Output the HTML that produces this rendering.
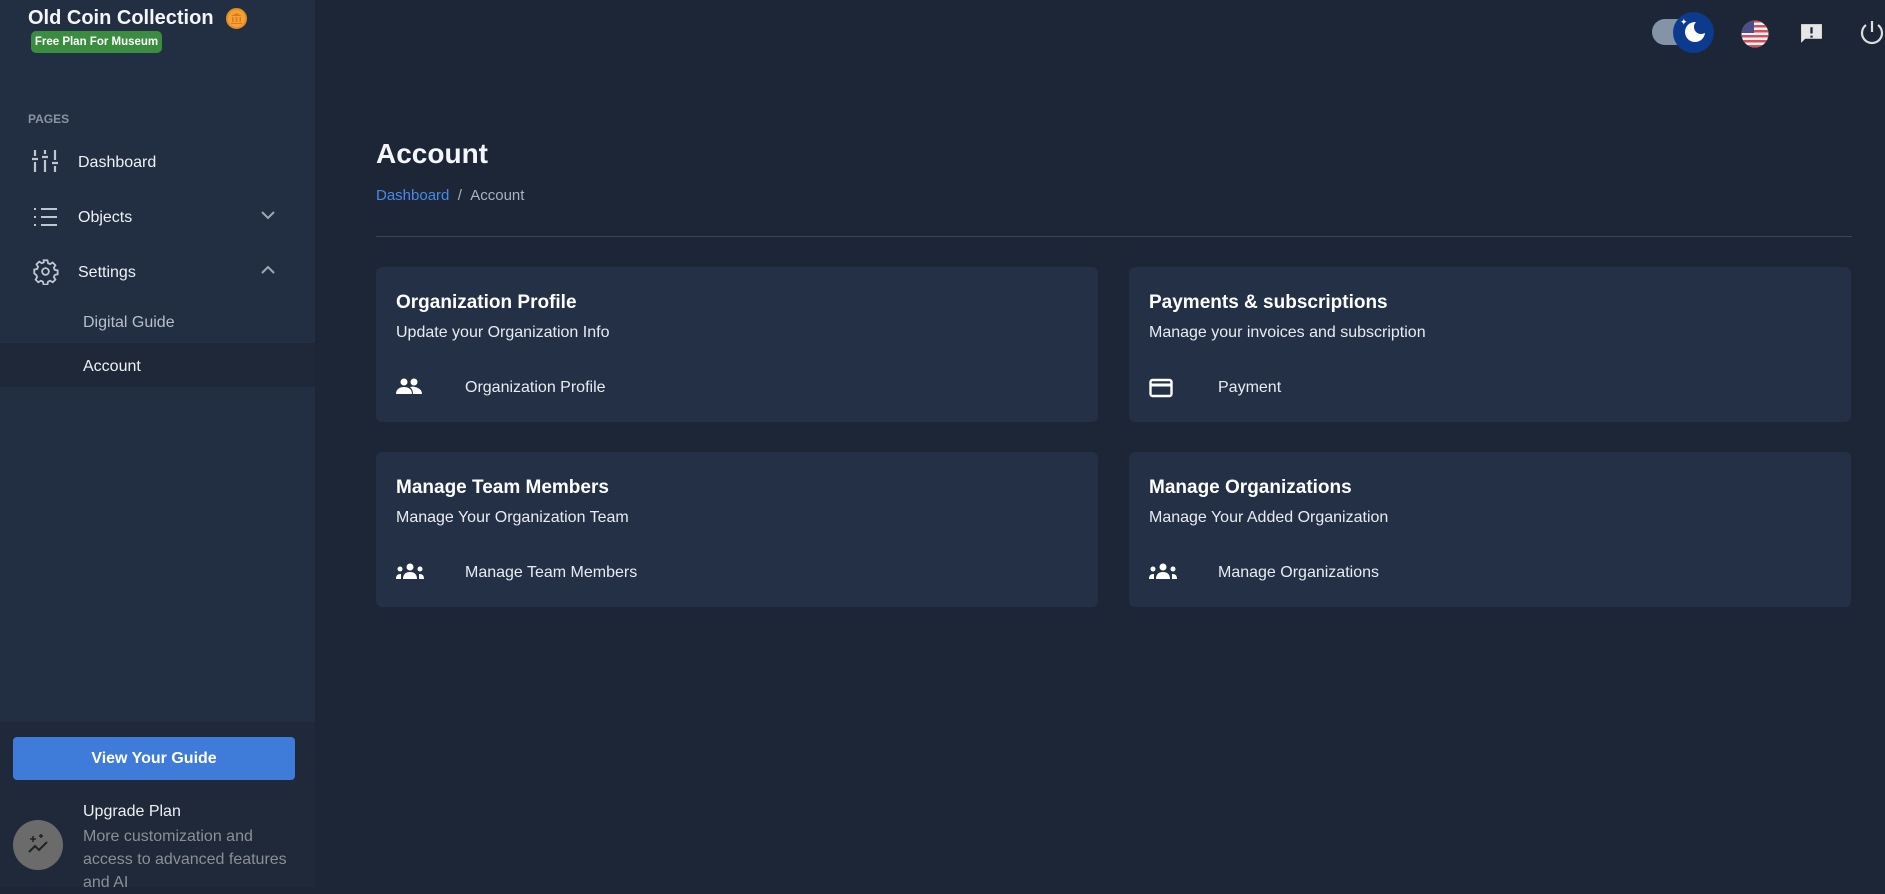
<!DOCTYPE html>
<html><head><meta charset="utf-8"><style>
*{box-sizing:border-box;margin:0;padding:0}
body{width:1885px;height:887px;overflow:hidden;background:#1c2636;font-family:"Liberation Sans",sans-serif;color:#fff;position:relative}
.sb{position:absolute;left:0;top:0;width:315px;height:887px;background:#222e42}
.sbb{position:absolute;left:0;top:722px;width:315px;height:165px;background:#1f2939}
.a{position:absolute;white-space:nowrap}
.card{position:absolute;background:#243045;border-radius:6px;width:722px;height:155px}
.card .t{position:absolute;left:20px;top:25px;font-size:19px;font-weight:bold}
.card .s{position:absolute;left:20px;top:57px;font-size:16px;color:#e8ecf2}
.card .l{position:absolute;left:89px;top:112px;font-size:16px;color:#e8ecf2}
.card svg{position:absolute;left:20px;top:111px}
</style></head><body>
<div class="sb"></div><div class="sbb"></div>
<div class="a" style="left:28px;top:7px;font-size:20px;font-weight:bold;color:#f4f6fa">Old Coin Collection</div>
<div class="a" style="left:226px;top:8px;width:21px;height:21px;border-radius:50%;background:#f2a23a;border:2px solid #e58f20"></div>
<svg class="a" style="left:230px;top:12px" width="13" height="13" viewBox="0 0 13 13" fill="#e07a10"><path d="M1 4l5.5-3 5.5 3zM2 5h1.5v5H2zM5.7 5h1.6v5H5.7zM9.5 5H11v5H9.5zM1 11h11v1H1z"/></svg>
<div class="a" style="left:31px;top:31px;width:131px;height:22px;background:#3a8c3f;border-radius:5px;font-size:11.5px;font-weight:bold;line-height:22px;text-align:center">Free Plan For Museum</div>
<div class="a" style="left:28px;top:112px;font-size:12px;font-weight:bold;color:#8a93a3">PAGES</div>
<svg class="a" style="left:32px;top:149px" width="27" height="24" viewBox="0 0 27 24" stroke="#c0c6d0" stroke-width="2.2" fill="none"><path d="M3 1v6M3 13v10M0 10h6M13 1v4M13 11v12M10 8h6M23 1v10M23 17v6M20 14h6"/></svg>
<div class="a" style="left:78px;top:154px;font-size:16px;color:#eef1f5">Dashboard</div>
<svg class="a" style="left:34px;top:207px" width="24" height="20" stroke="#c0c6d0" stroke-width="2" fill="none"><path d="M0 2h2M7 2h16M0 10h2M7 10h16M0 18h2M7 18h16"/></svg>
<div class="a" style="left:78px;top:209px;font-size:16px;color:#eef1f5">Objects</div>
<svg class="a" style="left:260px;top:210px" width="16" height="10" stroke="#a0a8b5" stroke-width="2" fill="none"><path d="M2 2l6 6 6-6"/></svg>
<svg class="a" style="left:32px;top:258px" width="27" height="27" viewBox="0 0 24 24" stroke="#c0c6d0" stroke-width="1.6" fill="none"><path d="M10.3 2h3.4l.6 2.6 1.8.8 2.3-1.4 2.4 2.4-1.4 2.3.8 1.8 2.6.6v3.4l-2.6.6-.8 1.8 1.4 2.3-2.4 2.4-2.3-1.4-1.8.8-.6 2.6h-3.4l-.6-2.6-1.8-.8-2.3 1.4-2.4-2.4 1.4-2.3-.8-1.8L2 13.7v-3.4l2.6-.6.8-1.8L4 5.6 6.4 3.2l2.3 1.4 1.8-.8z"/><circle cx="12" cy="12" r="3"/></svg>
<div class="a" style="left:78px;top:264px;font-size:16px;color:#eef1f5">Settings</div>
<svg class="a" style="left:260px;top:265px" width="16" height="10" stroke="#a0a8b5" stroke-width="2" fill="none"><path d="M2 8l6-6 6 6"/></svg>
<div class="a" style="left:83px;top:314px;font-size:16px;color:#b8bfca">Digital Guide</div>
<div class="a" style="left:0;top:343px;width:315px;height:44px;background:#1e2838"></div>
<div class="a" style="left:83px;top:358px;font-size:16px;color:#eef1f5">Account</div>
<div class="a" style="left:13px;top:737px;width:282px;height:43px;background:#3f7bd9;border-radius:4px;font-size:16px;font-weight:bold;line-height:43px;text-align:center">View Your Guide</div>
<div class="a" style="left:13px;top:820px;width:50px;height:50px;border-radius:50%;background:#6b6b6b"></div>
<svg class="a" style="left:25px;top:832px" width="26" height="26" stroke="#222" stroke-width="2" fill="none"><path d="M4 20l6-6 4 4 8-8"/><path d="M8 4v6M5 7h6M16 2v4M14 4h4" stroke-width="1.5"/></svg>
<div class="a" style="left:83px;top:803px;font-size:16px;color:#eef1f5">Upgrade Plan</div>
<div class="a" style="left:83px;top:825px;font-size:16px;line-height:23px;color:#8b8f96">More customization and<br>access to advanced features<br>and AI</div>

<div class="a" style="left:1652px;top:19px;width:50px;height:26px;border-radius:13px;background:#8494a6"></div>
<div class="a" style="left:1673px;top:12px;width:41px;height:41px;border-radius:50%;background:#0b3a8f"></div>
<div class="a" style="left:1685px;top:22px;width:20px;height:20px;border-radius:50%;background:#fff"></div>
<div class="a" style="left:1694px;top:20px;width:14px;height:14px;border-radius:50%;background:#0b3a8f"></div>
<div class="a" style="left:1680px;top:17px;font-size:9px">✦</div>
<svg class="a" style="left:1741px;top:20px" width="28" height="28" viewBox="0 0 28 28"><defs><clipPath id="c"><circle cx="14" cy="14" r="13.5"/></clipPath></defs><g clip-path="url(#c)"><rect width="28" height="28" fill="#f3f3f3"/><g fill="#d4505a"><rect y="0" width="28" height="2.5"/><rect y="5" width="28" height="2.5"/><rect y="10" width="28" height="2.5"/><rect y="15" width="28" height="2.5"/><rect y="20" width="28" height="2.5"/><rect y="25" width="28" height="3"/></g><rect width="13" height="13" fill="#4a4f8a"/></g></svg>
<svg class="a" style="left:1799px;top:21px" width="25" height="25" viewBox="0 0 24 24"><path d="M2 3h20v14H6l-4 4z" fill="#e6e6e6"/><path d="M12 6v6M12 14v2" stroke="#1c2636" stroke-width="2.2"/></svg>
<svg class="a" style="left:1857px;top:18px" width="30" height="30" viewBox="0 0 30 30" stroke="#ddd" stroke-width="2.2" fill="none"><path d="M15 3v11"/><path d="M9 7a10 10 0 1 0 12 0"/></svg>

<div class="a" style="left:376px;top:138px;font-size:28px;font-weight:bold;color:#f4f6fa">Account</div>
<div class="a" style="left:376px;top:187px;font-size:15px;color:#aab2bf"><span style="color:#4a88e8">Dashboard</span>&nbsp;&nbsp;/&nbsp;&nbsp;Account</div>
<div class="a" style="left:376px;top:236px;width:1476px;height:1px;background:#3a4556"></div>

<div class="card" style="left:376px;top:267px"><div class="t">Organization Profile</div><div class="s">Update your Organization Info</div>
<svg width="26" height="16" viewBox="0 0 26 16" fill="#fff"><circle cx="8" cy="4" r="3.5"/><circle cx="18" cy="4" r="3.5"/><path d="M0 16c0-5 4-7 8-7s8 2 8 7zM14 9c2-.5 4-.5 5 0 4 1 7 3 7 7h-9c0-3-1-5-3-7z"/></svg>
<div class="l">Organization Profile</div></div>
<div class="card" style="left:1129px;top:267px"><div class="t">Payments &amp; subscriptions</div><div class="s">Manage your invoices and subscription</div>
<svg width="24" height="20" viewBox="0 0 24 20" fill="none" stroke="#fff" stroke-width="2.4"><rect x="1.5" y="2" width="21" height="16" rx="2"/><path d="M1.5 7h21" stroke-width="3"/></svg>
<div class="l">Payment</div></div>
<div class="card" style="left:376px;top:452px"><div class="t">Manage Team Members</div><div class="s">Manage Your Organization Team</div>
<svg width="28" height="16" viewBox="0 0 28 16" fill="#fff"><circle cx="14" cy="4" r="3.5"/><circle cx="4" cy="6" r="2.5"/><circle cx="24" cy="6" r="2.5"/><path d="M7 16c0-5 3-7 7-7s7 2 7 7zM0 16c0-4 2-5 5-5v5zM28 16c0-4-2-5-5-5v5z"/></svg>
<div class="l">Manage Team Members</div></div>
<div class="card" style="left:1129px;top:452px"><div class="t">Manage Organizations</div><div class="s">Manage Your Added Organization</div>
<svg width="28" height="16" viewBox="0 0 28 16" fill="#fff"><circle cx="14" cy="4" r="3.5"/><circle cx="4" cy="6" r="2.5"/><circle cx="24" cy="6" r="2.5"/><path d="M7 16c0-5 3-7 7-7s7 2 7 7zM0 16c0-4 2-5 5-5v5zM28 16c0-4-2-5-5-5v5z"/></svg>
<div class="l">Manage Organizations</div></div>
</body></html>
